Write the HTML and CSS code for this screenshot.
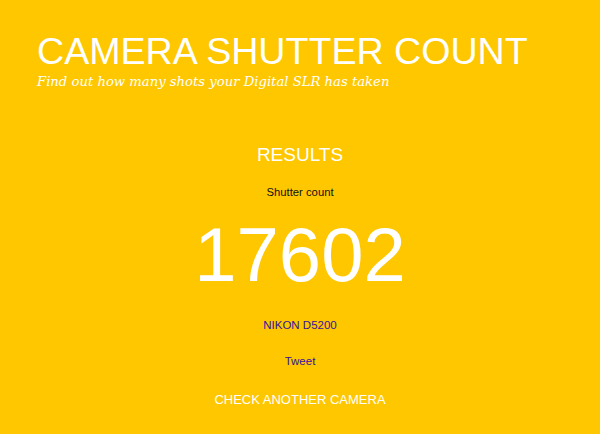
FILE: index.html
```html
<!DOCTYPE html>
<html lang="en">
<head>
<meta charset="utf-8">
<title>Camera Shutter Count</title>
<link rel="stylesheet" href="styles.css">
</head>
<body>
<header class="masthead">
  <h1 class="site-title">CAMERA SHUTTER COUNT</h1>
  <p class="tagline">Find out how many shots your Digital SLR has taken</p>
</header>
<main class="results">
  <h2 class="results-title">RESULTS</h2>
  <p class="count-label">Shutter count</p>
  <p class="count-value">17602</p>
  <p class="camera-model"><a href="#">NIKON D5200</a></p>
  <p class="tweet"><a href="#">Tweet</a></p>
  <p class="again"><a href="#">CHECK ANOTHER CAMERA</a></p>
</main>
</body>
</html>
```
FILE: styles.css
```css
html, body {
  margin: 0;
  padding: 0;
}

body {
  background: #ffc700;
  font-family: "Liberation Sans", Arial, sans-serif;
  color: #fff;
  height: 434px;
  overflow: hidden;
}

.masthead {
  padding: 30px 0 0 37px;
}

.site-title {
  margin: 0;
  font-weight: normal;
  font-size: 37.6px;
  line-height: 42px;
}

.tagline {
  margin: 1px 0 0;
  font-family: "DejaVu Serif", Georgia, serif;
  font-style: italic;
  font-size: 13.2px;
  line-height: 18px;
}

.results {
  display: flex;
  flex-direction: column;
  align-items: center;
  padding-top: 52px;
}

.results p {
  margin: 0;
}

.results a {
  text-decoration: none;
}

.results-title {
  margin: 0;
  font-weight: normal;
  font-size: 19px;
  line-height: 24px;
}

.count-label {
  margin-top: 18px !important;
  font-size: 11.3px;
  line-height: 14px;
  color: #111;
}

.count-value {
  margin-top: 14px !important;
  font-size: 76px;
  line-height: 84px;
}

.camera-model {
  margin-top: 21px !important;
  font-size: 11.5px;
  line-height: 14px;
}

.camera-model a,
.tweet a {
  color: #34139c;
}

.tweet {
  margin-top: 22px !important;
  font-size: 11.5px;
  line-height: 14px;
}

.again {
  margin-top: 24px !important;
  font-size: 13px;
  line-height: 16px;
}

.again a {
  color: #fff;
}
```
